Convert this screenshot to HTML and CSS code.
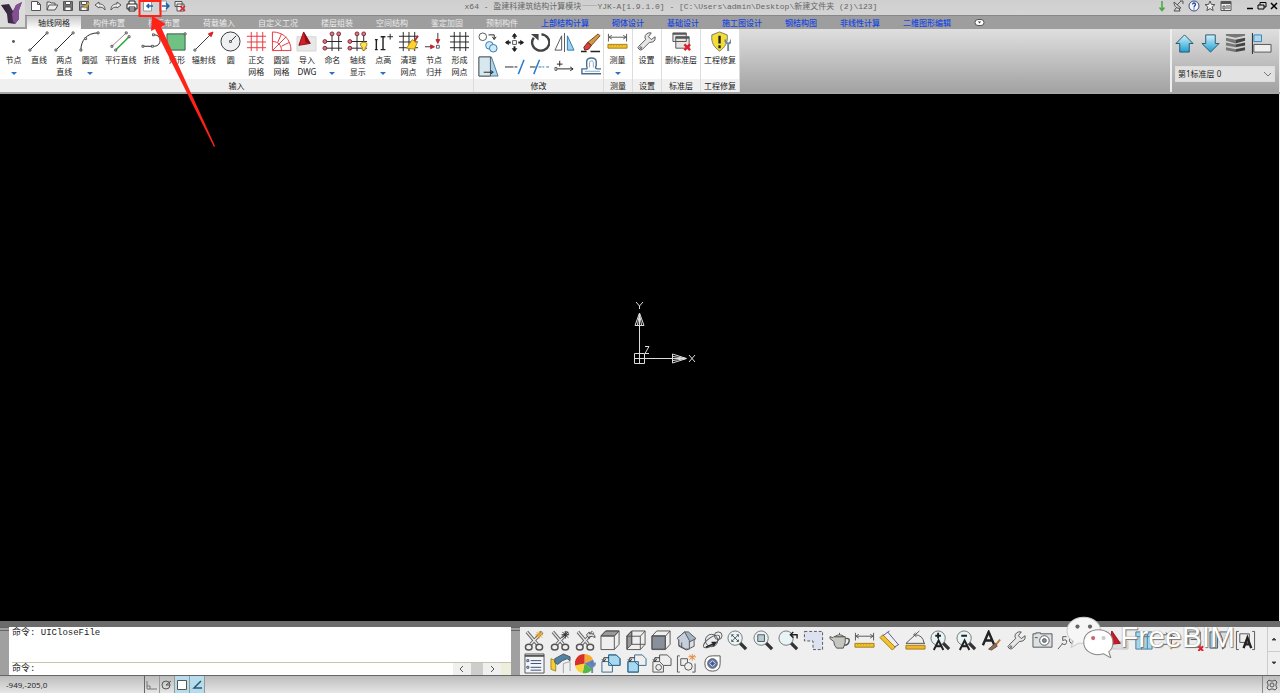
FILE: index.html
```html
<!DOCTYPE html>
<html lang="zh-CN">
<head>
<meta charset="utf-8">
<meta name="viewport" content="width=device-width, initial-scale=1">
<title>YJK-A 建筑结构计算模块</title>
<link rel="stylesheet" href="styles.css">
</head>
<body>
<svg class="sprite" aria-hidden="true">
  <defs>
    <linearGradient id="sky" x1="0" y1="0" x2="0" y2="1"><stop offset="0" stop-color="#d5f1fb"/><stop offset="1" stop-color="#1a9fd0"/></linearGradient>
    <linearGradient id="violet" x1="0" y1="0" x2="1" y2="0"><stop offset="0" stop-color="#2a2130"/><stop offset="1" stop-color="#5b3a66"/></linearGradient>
  </defs>
  <symbol id="scissors" viewBox="0 0 22 22"><path d="M3 2l11 13M19 2L7 15" stroke="#666" stroke-width="3.500"/><path d="M3 2l11 13M19 2L7 15" stroke="#e6e6e6" stroke-width="1.500"/><ellipse cx="5" cy="18" rx="3.500" ry="3" stroke="#555" stroke-width="1.500"/><ellipse cx="16" cy="18" rx="3.500" ry="3" stroke="#555" stroke-width="1.500"/></symbol>
  <symbol id="lens" viewBox="0 0 22 22"><path d="M13 13l7 7" stroke="#333" stroke-width="3.500"/><circle cx="8.500" cy="8.500" r="7.500" fill="#e9f4f6" stroke="#777"/></symbol>
  <symbol id="ruler" viewBox="0 0 22 22"><path d="M1.500 3v8M20.500 3v8M2 6.500h18M5 4.500l-3 2 3 2M17 4.500l3 2-3 2"/><path d="M1 14h20v4H1z" fill="#efc32f" stroke="#a57b12"/><path d="M4 14v2M7 14v2M10 14v2M13 14v2M16 14v2" stroke="#c79a20"/></symbol>
  <symbol id="wrench" viewBox="0 0 22 22"><path d="M3 16L10 9Q8 4 13 2l3 0-3 4 3 3 4-3Q21 12 14 12L7 19Q5 21 3 19T3 16z" fill="#e7e7e7" stroke="#555"/><circle cx="5" cy="17.500" r="1"/></symbol>
  <symbol id="grid" viewBox="0 0 22 22"><path d="M1 5.500h20M1 11.500h20M1 17.500h20M5.500 1v20M11.500 1v20M17.500 1v20"/></symbol>
  <symbol id="nodes" viewBox="0 0 22 22"><path d="M2 11h19M2 18h19M10.500 3v18M17.500 3v18" stroke="#222"/><g fill="#d97783" stroke="#7d2a35"><circle cx="10.500" cy="3" r="2"/><circle cx="17.500" cy="3" r="2"/><circle cx="3" cy="11" r="2"/><circle cx="3" cy="18" r="2"/></g></symbol>
  <symbol id="cube" viewBox="0 0 22 22"><path d="M1 6.500L6 1h14v14l-5 5.500H1zM1 6.500h14v14M15 6.500L20 1"/></symbol>
  <symbol id="page" viewBox="0 0 12 12"><path d="M1.500 1.500h6l3 3v6h-9zM7.500 1.500v3h3" fill="#fff"/></symbol>
  <symbol id="sheets" viewBox="0 0 22 22"><path d="M2 9h7l4 4v7H2z"/><path d="M9 9V2h8l4 4v7h-8" /><path d="M9 5H4v3M2 6.500L4 9l2-2.500" stroke="#222"/></symbol>
</svg>

<div class="app">
  <header class="titlebar">
    <button class="logo" aria-label="应用菜单"><svg viewBox="0 0 25 26"><path d="M1 4l8-1 4 7 3-6 6-3-3 8v9l-4 5-7-1-1-9z" fill="url(#violet)"/><path d="M12 13l4-9 6-3-3 8v9l-4 5-2-3z" fill="#835091"/></svg></button>
    <nav class="quick" aria-label="快速访问">
      <button aria-label="新建"><svg><use href="#page"/></svg></button>
      <button aria-label="打开"><svg viewBox="0 0 12 12"><path d="M1 10V2h3l1 1h4v2M1 10l2-5h9l-3 5z" fill="#eee"/></svg></button>
      <button aria-label="保存"><svg viewBox="0 0 12 12"><path d="M1.500 1.500h9v9h-9z" fill="#777"/><path d="M3.500 1.500h5v3h-5zM3 7h6v3.500H3z" fill="#fff"/></svg></button>
      <button aria-label="另存为"><svg viewBox="0 0 12 12"><path d="M1.500 1.500h9v9h-9z" fill="#999"/><path d="M3.500 1.500h5v3h-5zM3 7h6v3.500H3z" fill="#fff"/><path d="M6 8l5-5" stroke="#d39a35" stroke-width="2"/></svg></button>
      <button aria-label="撤销"><svg viewBox="0 0 12 12"><path d="M1 5l4-3v2c4 0 6 2 6 6-1-2-3-3-6-3v1z" fill="#eee"/></svg></button>
      <button aria-label="重做"><svg viewBox="0 0 12 12"><path d="M11 5L7 2v2C3 4 1 6 1 10c1-2 3-3 6-3v1z" fill="#eee"/></svg></button>
      <button aria-label="打印"><svg viewBox="0 0 12 12"><path d="M3 4V1h6v3M1 4h10v5H1zM3 7h6v4H3z" fill="#fff" stroke="#222"/></svg></button>
      <button aria-label="导入"><svg viewBox="0 0 12 12"><path d="M1.500 1h8v10h-8z" fill="#fff" stroke="#999"/><path d="M11 6H5M7 4L5 6l2 2" stroke="#1764b5" stroke-width="1.500"/></svg></button>
      <button aria-label="导出"><svg viewBox="0 0 12 12"><path d="M1.500 1h7v10h-7z" fill="#fff" stroke="#999"/><path d="M4 6h7M8 3l3 3-3 3" stroke="#1764b5" stroke-width="1.500"/></svg></button>
      <button aria-label="关闭文件"><svg viewBox="0 0 12 12"><path d="M1 1.500h7v5H1zM3 4h7v7H3z" fill="#eee"/><path d="M6 6l5 5M11 6l-5 5" stroke="#e0202c" stroke-width="1.500"/></svg></button>
    </nav>
    <h1 class="title">x64 - 盈建科建筑结构计算模块<span>——</span>YJK-A[1.9.1.0] - [C:\Users\admin\Desktop\新建文件夹 (2)\123]</h1>
    <div class="quick help">
      <button aria-label="下载"><svg viewBox="0 0 12 12"><path d="M6 1v9M3.500 7.500L6 10.500l2.500-3" stroke="#4aa547" stroke-width="1.500"/></svg></button>
      <button aria-label="通讯"><svg viewBox="0 0 12 12"><path d="M2 2c0 5 3 7 7 6zM5 5l4-4M8 1h3v3M4 8l-2 3h6L7 8"/></svg></button>
      <button aria-label="帮助"><svg viewBox="0 0 12 12"><circle cx="6" cy="6" r="5" fill="#f4f8ff" stroke="#3d4a78"/><path d="M4.500 4.500c0-2 3-2 3 0 0 1-1.500 1-1.500 3M6 8.500v1" stroke="#2347a6" stroke-width="1.300"/></svg></button>
      <button aria-label="收藏"><svg viewBox="0 0 12 12"><path d="M6 1l1.400 3.400 3.600.2-2.800 2.300 1 3.700L6 8.600l-3.200 2 1-3.700L1 4.600l3.600-.2z" fill="#eee"/></svg></button>
      <button aria-label="窗口选项"><svg viewBox="0 0 12 12"><path d="M1 1.500h10v9H1z" fill="#eee"/><path d="M1 3h10" stroke-width="2"/><path d="M3 6h2v3H3zM6 6h4M6 8h4"/></svg></button>
    </div>
    <div class="window">
      <button aria-label="最小化"><svg viewBox="0 0 12 12"><path d="M3 8.500h6" stroke="#000" stroke-width="1.500"/></svg></button>
      <button aria-label="还原"><svg viewBox="0 0 12 12"><path d="M4 5V2.500h6V7H8M2 5h6v4H2z" stroke="#000"/></svg></button>
      <button aria-label="关闭"><svg viewBox="0 0 12 12"><path d="M3 3l6 6M9 3L3 9" stroke="#000" stroke-width="1.500"/></svg></button>
    </div>
  </header>

  <nav class="tabs" aria-label="功能区">
    <button class="active">轴线网格</button><button>构件布置</button><button>楼板布置</button><button>荷载输入</button><button>自定义工况</button><button>楼层组装</button><button>空间结构</button><button>鉴定加固</button><button>预制构件</button><a href="#">上部结构计算</a><a href="#">砌体设计</a><a href="#">基础设计</a><a href="#">施工图设计</a><a href="#">钢结构图</a><a href="#">非线性计算</a><a href="#">二维图形编辑</a><button aria-label="折叠"><svg viewBox="0 0 10 7"><rect x=".5" y=".5" width="9" height="6" rx="3" fill="#fff"/><path d="M3.500 2.500h3L5 4.500z" fill="#333" stroke="none"/></svg></button>
  </nav>

  <section class="ribbon">
    <div class="panel draw">
      <div class="tools">
        <button class="tool"><svg viewBox="0 0 22 22"><circle cx="11" cy="11" r="1.500" fill="#555" stroke="none"/></svg><span>节点</span><i></i></button>
        <button class="tool"><svg viewBox="0 0 22 22"><path d="M2 20L20 2" stroke="#222"/><path d="M1 19h2v2H1zM19 1h2v2h-2z" fill="#fff"/></svg><span>直线</span></button>
        <button class="tool"><svg viewBox="0 0 22 22"><path d="M2 20L20 2" stroke="#222"/><path d="M1 19h2v2H1zM19 1h2v2h-2z" fill="#fff"/></svg><span>两点<br>直线</span></button>
        <button class="tool"><svg viewBox="0 0 22 22"><path d="M2 20C2 10 8 2 20 2" stroke="#222"/><path d="M1 19h2v2H1zM19 1h2v2h-2zM6 7h2v2H6z" fill="#fff"/></svg><span>圆弧</span><i></i></button>
        <button class="tool wide"><svg viewBox="0 0 22 22"><path d="M2 16L17 2" stroke="#a47a7a"/><path d="M6 20L20 6" stroke="#24a637" stroke-width="1.500"/><path d="M1 15h2v2H1zM16 1h2v2h-2zM5 19h2v2H5zM19 5h2v2h-2z" fill="#fff"/></svg><span>平行直线</span></button>
        <button class="tool"><svg viewBox="0 0 22 22"><path d="M2 16h12c8 0 8-12 0-12h-1" stroke="#222"/><path d="M1 15h2v2H1zM11 15h2v2h-2zM12 3h2v2h-2z" fill="#fff"/></svg><span>折线</span></button>
        <button class="tool"><svg viewBox="0 0 22 22"><path d="M1 3h19v17H1z" fill="#70c184" stroke="#355c40"/><path d="M19 2h2v2h-2zM0 19h2v2H0z" fill="#fff"/></svg><span>矩形</span></button>
        <button class="tool mid"><svg viewBox="0 0 22 22"><path d="M2 20L18 4" stroke="#333"/><path d="M1 19h2v2H1z" fill="#fff"/><path d="M21 1l-2 5-3-3z" fill="#e31c23" stroke="#e31c23"/></svg><span>辐射线</span></button>
        <button class="tool"><svg viewBox="0 0 22 22"><circle cx="11" cy="11" r="10" fill="#eef0f3" stroke="#333"/><path d="M11 11l6-6" stroke="#333"/><path d="M10 10h2v2h-2z" fill="#fff"/></svg><span>圆</span></button>
        <button class="tool red"><svg><use href="#grid"/></svg><span>正交<br>网格</span></button>
        <button class="tool red"><svg viewBox="0 0 22 22"><path d="M1.500 1v19.500H21C21 9 13 1 1.500 1zM1.500 11c6 0 9.500 4 9.500 9.500M2 20L16 6M7 12l4-9M11 16l8-4"/></svg><span>圆弧<br>网格</span></button>
        <button class="tool"><svg viewBox="0 0 22 22"><path d="M1 6h20v15H1z" fill="#e8e8e8" stroke="#d5d5d5"/><path d="M8 1l7 12-12 2z" fill="#d41f27" stroke="#8f1015"/><path d="M8 1l7 12-5-1z" fill="#8f1015" stroke="none"/></svg><span>导入<br>DWG</span></button>
        <button class="tool"><svg><use href="#nodes"/></svg><span>命名</span><i></i></button>
        <button class="tool"><svg viewBox="0 0 22 22"><use href="#nodes"/><path d="M14 13q4-3 7 0 0 4-2 4v3h-3v-3q-2-1-2-4z" fill="#ffe25a" stroke="#b18718"/></svg><span>轴线<br>显示</span></button>
        <button class="tool"><svg viewBox="0 0 22 22"><path d="M3.500 9v10M10.500 6v13M2 19.500h3M8 19.500h5M8 6h5M2 9h3" stroke="#222" stroke-width="1.500"/><path d="M15 6h6M18 3v6" stroke="#222"/></svg><span>点高</span><i></i></button>
        <button class="tool dark"><svg viewBox="0 0 22 22"><use href="#grid"/><path d="M21 5l-4 6" stroke="#b2322b" stroke-width="2"/><path d="M15 9l5 4-3 6-8-1z" fill="#ffd32d" stroke="#b18718"/></svg><span>清理<br>网点</span></button>
        <button class="tool"><svg viewBox="0 0 22 22"><path d="M14.500 2v10M1 16.500h9" stroke="#333"/><path d="M12.500 9h4l-2 4zM7 14.500l4 2-4 2z" fill="#c4262d" stroke="#c4262d"/><path d="M13 15h3v3h-3z" fill="#fff"/></svg><span>节点<br>归并</span></button>
        <button class="tool dark"><svg><use href="#grid"/></svg><span>形成<br>网点</span></button>
      </div>
      <h2>输入</h2>
    </div>
    <div class="panel modify">
      <div class="matrix">
        <button aria-label="复制"><svg viewBox="0 0 22 22"><circle cx="5" cy="5" r="4"/><path d="M11 3h6v4M15 5l2 3 2-3" stroke="#222"/><circle cx="12" cy="14" r="4" fill="#cfeaf8" stroke="#2f79b0"/><circle cx="16" cy="17" r="4" fill="#cfeaf8" stroke="#2f79b0"/></svg></button>
        <button aria-label="移动"><svg viewBox="0 0 22 22"><path d="M11 2v5M11 15v5M2 11h5M15 11h5" stroke="#222" stroke-width="2"/><path d="M8 5l3-4 3 4zM8 17l3 4 3-4zM5 8l-4 3 4 3zM17 8l4 3-4 3z" fill="#222" stroke="none"/><path d="M9 9h4v4H9z"/></svg></button>
        <button aria-label="旋转"><svg viewBox="0 0 22 22"><path d="M5 6a9 8.500 0 1 0 8-3.500" stroke="#444" stroke-width="2.500"/><path d="M2 2h8v7z" fill="#444" stroke="none"/></svg></button>
        <button aria-label="镜像"><svg viewBox="0 0 22 22"><path d="M11 1v20"/><path d="M8 4v15H1z" fill="#fff"/><path d="M14 4v15h7z" fill="#9ed3ee" stroke="#2f79b0"/></svg></button>
        <button aria-label="删除"><svg viewBox="0 0 22 22"><path d="M1 20.500h6M11 20.500h10" stroke="#222" stroke-width="1.500"/><path d="M19 2l2 2-9 10-4-3z" fill="#d49745" stroke="#704c20"/><path d="M8 11l4 3-3 4-4 1-1-3z" fill="#d8443a" stroke="#702018"/></svg></button>
        <button aria-label="拉伸"><svg viewBox="0 0 22 22"><path d="M1 1h13l7 20H1z" fill="#a8d7ef" stroke="#4d7690"/><path d="M1 1h12v20H1z" fill="#d8e8f1"/><path d="M6 17h9M13 15l3 2-3 2" stroke="#222"/></svg></button>
        <button aria-label="修剪"><svg viewBox="0 0 22 22"><path d="M1 11.500h9M11 11.500h3" stroke="#222"/><path d="M15 19l6-15" stroke="#2477ca" stroke-width="1.500"/></svg></button>
        <button aria-label="延伸"><svg viewBox="0 0 22 22"><path d="M1 11.500h6" stroke="#222"/><path d="M10 11.500h3M14 11.500h2M18 11.500h3" stroke="#2477ca"/><path d="M5 19l6-15" stroke="#2477ca" stroke-width="1.500"/></svg></button>
        <button aria-label="偏移"><svg viewBox="0 0 22 22"><path d="M2 13.500h18M17 11.500l3 2-3 2M3 8.500h6M6 5v6" stroke="#222"/><path d="M1 12h2v3H1z" fill="#fff"/></svg></button>
        <button aria-label="等距"><svg viewBox="0 0 22 22"><path d="M22 18.500H2v-5h5q1-1 0-3V6q0-4 5-4t5 4v4q-2 3 1 3.500h4" stroke="#486f91" stroke-width="1.500"/><path d="M21 16H5M10 12V7q0-2 2-2t2 2v5" stroke="#88a9c2"/></svg></button>
      </div>
      <h2>修改</h2>
    </div>
    <div class="panel small"><div class="tools"><button class="tool"><svg><use href="#ruler"/></svg><span>测量</span><i></i></button></div><h2>测量</h2></div>
    <div class="panel small"><div class="tools"><button class="tool"><svg><use href="#wrench"/></svg><span>设置</span></button></div><h2>设置</h2></div>
    <div class="panel large"><div class="tools"><button class="tool wide"><svg viewBox="0 0 22 22"><path d="M2 2h14v9H2zM5 6h14v12H5z" fill="#e5e5e5"/><path d="M2 3h14M5 7h14" stroke-width="2"/><path d="M14 14l6 6M20 14l-6 6" stroke="#e31c2c" stroke-width="2.500"/></svg><span>删标准层</span></button></div><h2>标准层</h2></div>
    <div class="panel large"><div class="tools"><button class="tool wide"><svg viewBox="0 0 22 22"><path d="M10 1l8 3c1 8-2 13-8 17C4 17 1 12 2 4z" fill="#f5de34" stroke="#777"/><path d="M10 5v8M10 15v3" stroke="#222" stroke-width="2.500"/><path d="M19 12v9M16 9q0 4 3 4t3-4" stroke="#6d899d" stroke-width="2"/></svg><span>工程修复</span></button></div><h2>工程修复</h2></div>
    <div class="floors">
      <div class="floor-tools">
        <button aria-label="上层"><svg viewBox="0 0 22 22"><path d="M11 2l9 9h-4v9H6v-9H2z" fill="url(#sky)" stroke="#28556c"/></svg></button>
        <button aria-label="下层"><svg viewBox="0 0 22 22"><path d="M11 20l9-9h-4V2H6v9H2z" fill="url(#sky)" stroke="#28556c"/></svg></button>
        <button aria-label="全楼"><svg viewBox="0 0 22 22"><g fill="#777" stroke="none"><path d="M1 1h20v2l-10 2L1 3zM1 5l10 2v4L1 8zM1 10l10 2v3L1 13zM1 15l10 2v3L1 18z"/><path d="M21 5l-10 2v4l10-3zM21 10l-10 2v3l10-2zM21 15l-10 2v3l10-2z" fill="#444"/></g></svg></button>
        <button aria-label="对齐"><svg viewBox="0 0 22 22"><path d="M1.500 0v22" stroke="#222"/><path d="M3 2h8v7H3z" fill="#add6ef" stroke="#3985b8"/><path d="M3 12h18v8H3z" fill="#eee"/></svg></button>
      </div>
      <select aria-label="标准层"><option>第1标准层 0</option></select>
    </div>
  </section>

  <main class="canvas">
    <svg class="axes" viewBox="0 0 60 66" aria-label="坐标轴">
      <path d="M5.500 53.500h10v10h-10zM10.500 64V16M5 58.500h52M6 25.500h9L10.500 13zM8.500 25l2-11 2 11M43.500 54v9l14-4.500zM44 56.500l13 2-13 2"/>
      <path d="M7 2l3.500 4L14 2M10.500 6v3M16 46.500h4l-4 7h4M66 55l-6 7M60 55l6 7"/>
    </svg>
  </main>

  <section class="dock">
    <div class="grip"></div>
    <div class="command">
      <p>命令: UICloseFile</p>
      <div class="entry">
        <label for="cmd">命令:</label><input id="cmd" type="text">
        <div class="hscroll"><button aria-label="向左"><svg viewBox="0 0 6 8"><path d="M4 1L1 4l3 3"/></svg></button><b></b><button aria-label="向右"><svg viewBox="0 0 6 8"><path d="M2 1l3 3-3 3"/></svg></button><em></em></div>
      </div>
    </div>
    <div class="grip"></div>
    <div class="palette">
      <button aria-label="剪切新建"><svg viewBox="0 0 22 22"><use href="#scissors"/><path d="M16 1v8M12 5h8M13 2l6 6M19 2l-6 6" stroke="#eda51c"/></svg></button>
      <button aria-label="剪切"><svg viewBox="0 0 22 22"><use href="#scissors"/><path d="M16 1v8M12 5h8M13 2l6 6M19 2l-6 6" stroke="#333"/></svg></button>
      <button aria-label="剪切还原"><svg viewBox="0 0 22 22"><use href="#scissors"/><path d="M12 5l3-3v2q6-1 6 4-2-2-6-1v2z" fill="#ddd"/></svg></button>
      <button aria-label="顶视图"><svg viewBox="0 0 22 22"><path d="M1 6l5-5h14l-5 5z" fill="#999"/><use href="#cube"/></svg></button>
      <button aria-label="左视图"><svg viewBox="0 0 22 22"><path d="M1 6l5-5v14l-5 5z" fill="#999"/><path d="M6 15h14M6 1v14"/><use href="#cube"/></svg></button>
      <button aria-label="前视图"><svg viewBox="0 0 22 22"><path d="M1 6h14v14H1z" fill="#87909b"/><use href="#cube"/></svg></button>
      <button aria-label="轴测"><svg viewBox="0 0 22 22"><path d="M3 10v7l8 4 8-4V9z" fill="#d9e1e9"/><path d="M1 9l8-7 4 0 8 7-8 4z" fill="#a5b2c1"/><path d="M1 9l8-7 5 9v9l-4 0-7-4v-6" fill="#c6d0dc"/><path d="M6 13v5"/></svg></button>
      <button aria-label="动态观察"><svg viewBox="0 0 22 22"><circle cx="10" cy="11" r="6.500" fill="#e8eef0"/><circle cx="17" cy="6" r="4"/><ellipse cx="10" cy="12" rx="10" ry="4" transform="rotate(-35 10 12)"/><path d="M4 18l9-4M10 13l4 0-2 4" stroke="#222" stroke-width="1.500"/></svg></button>
      <button aria-label="全部缩放"><svg viewBox="0 0 22 22"><use href="#lens"/><path d="M5 5l7 7M12 5l-7 7M5 7V5h2M10 5h2v2M5 10v2h2M10 12h2v-2" stroke="#555"/></svg></button>
      <button aria-label="窗口缩放"><svg viewBox="0 0 22 22"><use href="#lens"/><path d="M5 5h7v7H5z" fill="#b9cdd5"/></svg></button>
      <button aria-label="上一视图"><svg viewBox="0 0 22 22"><use href="#lens"/><path d="M20 9V5h-6M16 2l-3 3 3 3" stroke="#222" stroke-width="1.500"/></svg></button>
      <button aria-label="框选"><svg viewBox="0 0 22 22"><path d="M1.500 1.500h19v19h-10v-9h-9z" fill="#dce2f0" stroke-dasharray="3 2"/></svg></button>
      <button aria-label="渲染"><svg viewBox="0 0 22 22"><path d="M17 9q5-1 4 3t-5 4" stroke-width="1.500"/><path d="M5 7h12q1 6-2 12H8Q5 16 5 12L1 9V7l3 1z" fill="#c4c6c0"/><path d="M6 7q5-4 10 0zM11 5V3" fill="#ddd"/></svg></button>
      <button aria-label="距离"><svg><use href="#ruler"/></svg></button>
      <button aria-label="斜距"><svg viewBox="0 0 22 22"><path d="M1 8l13 13 3-3L4 5z" fill="#efc32f" stroke="#a57b12"/><path d="M9 2l11 13M4 6l7-5M16 18l5-3" stroke="#5c5594"/></svg></button>
      <button aria-label="角度"><svg viewBox="0 0 22 22"><path d="M1 16h20v4H1z" fill="#efb52f" stroke="#a57b12"/><path d="M1 14L15 1M10 5q9 0 10 9M1 14h20M11 3l-2 2 3 2"/></svg></button>
      <button aria-label="放大文字"><svg viewBox="0 0 22 22"><use href="#lens"/><path d="M8.500 3v6M5.500 6h6M4 21l5-10 5 10M6 17h6" stroke="#222" stroke-width="2"/></svg></button>
      <button aria-label="缩小文字"><svg viewBox="0 0 22 22"><use href="#lens"/><path d="M5.500 6h6M4 21l5-10 5 10M6 17h6" stroke="#222" stroke-width="2"/></svg></button>
      <button aria-label="文字样式"><svg viewBox="0 0 22 22"><path d="M2 16L8 2l6 14M5 11h7" stroke="#222" stroke-width="2.500"/><path d="M20 10l-5 6" stroke="#c27b36" stroke-width="2"/><path d="M15 14l2 3-6 4-3-1z" fill="#9d6a48"/></svg></button>
      <button aria-label="工具设置"><svg><use href="#wrench"/></svg></button>
      <button aria-label="截图"><svg viewBox="0 0 22 22"><path d="M1 4h3V3h5v1h12v14H1z" fill="#dde1e3"/><circle cx="13" cy="11" r="5" fill="#fff"/><circle cx="13" cy="11" r="2" fill="#7896aa"/><path d="M3 8h3"/></svg></button>
      <button aria-label="标注"><svg viewBox="0 0 22 22"><path d="M1 20L6 14M10 7H6v4q5-2 4 2t-5 1M15 7q-4 4 0 7 4-3 0-7M16 15l5-6"/></svg></button>
      <button aria-label="图层"><svg viewBox="0 0 22 22"><path d="M2 8h16v10H2z" fill="#ddd" stroke="#aaa"/></svg></button>
      <button aria-label="导出图纸"><svg viewBox="0 0 22 22"><path d="M5 12h16v8H5z" fill="#ddd" stroke="#ccc"/><path d="M4 1l9 13-11 1z" fill="#c61b26" stroke="#9b121b"/></svg></button>
      <button aria-label="表格"><svg viewBox="0 0 22 22"><path d="M3 2h17v18H3zM3 7h17M9 2v18M15 2v18" fill="#a8d5e8" stroke="#447c99"/></svg></button>
      <button aria-label="编辑文字"><svg viewBox="0 0 22 22"><path d="M1 5h12v10H1M7 3l11 5"/><path d="M12 20l7-7" stroke="#e59938" stroke-width="2"/></svg></button>
      <button aria-label="删除图纸"><svg viewBox="0 0 22 22"><path d="M5 2h12v16H5zM7 6h8M7 10h8"/><path d="M15 17l5 5M20 17l-5 5" stroke="#e31c2c" stroke-width="2"/></svg></button>
      <button aria-label="筛选"><svg viewBox="0 0 22 22"><path d="M1 2h8v17H1z" fill="#9ecbe1"/><path d="M11 2h10l-4 7v9l-3 2V9z" fill="#ddd"/></svg></button>
      <button aria-label="文字框"><svg viewBox="0 0 22 22"><path d="M4 1.500H1.500v19H4M18 1.500h2.500v19H18M5 4h10v9H5z"/><path d="M9 19l4-11 4 11M11 15h5" stroke="#222" stroke-width="2.500"/></svg></button>
      <button aria-label="列表"><svg viewBox="0 0 22 22"><path d="M1 1h20v20H1z" fill="#f4f5f8"/><path d="M1 3h20" stroke-width="2"/><path d="M3 7h2v2H3zM3 14h2v2H3zM7 8h11M7 11h11M7 15h11M7 18h11" stroke="#3c4e75"/></svg></button>
      <button aria-label="构件"><svg viewBox="0 0 22 22"><path d="M1 6l5 2v11l-5-2z" fill="#f2cc3b" stroke="#a58825"/><path d="M5 6l9-5 7 3v4l-3-2-5 2-5 4-3-2z" fill="#4e84aa"/><path d="M14 11l7-2v10M14 11v10" stroke="#9aa6af"/></svg></button>
      <button aria-label="颜色"><svg viewBox="0 0 22 22"><g stroke="none"><path d="M10 11V1a10 10 0 0 1 9 6z" fill="#f7a928"/><path d="M10 11l9-4a10 10 0 0 1-1 10z" fill="#5d7bc8"/><path d="M10 11l8 6a10 10 0 0 1-10 4z" fill="#52b848"/><path d="M10 11L8 21a10 10 0 0 1-8-8z" fill="#f9d43b"/><path d="M10 11L0 13A10 10 0 0 1 10 1z" fill="#d72f29"/></g><path d="M18 13v8M15 10q0 4 3 4t3-4" stroke="#718ca2" stroke-width="2"/></svg></button>
      <button class="blue" aria-label="前置"><svg viewBox="0 0 22 22"><path d="M9 2h8l4 4v7H9z" fill="#a7d9f3"/><use href="#sheets"/></svg></button>
      <button class="blue" aria-label="后置"><svg viewBox="0 0 22 22"><path d="M2 9h11v11H2z" fill="#a7d9f3"/><use href="#sheets"/></svg></button>
      <button aria-label="置底"><svg viewBox="0 0 22 22"><use href="#sheets"/><circle cx="8" cy="15" r="3"/></svg></button>
      <button aria-label="编组"><svg viewBox="0 0 22 22"><path d="M4 3H1.500v17H4M17 20h3v-9M5 6h7v7H5z"/><circle cx="13" cy="14" r="4" fill="#eee"/><path d="M17 1v7M13 4h8M14 2l6 5M20 2l-6 5" stroke="#e88734"/></svg></button>
      <button aria-label="视点"><svg viewBox="0 0 22 22"><path d="M11 3h8v8q0 8-8 8t-8-8 8-8z" fill="#fff"/><circle cx="11" cy="11" r="5" fill="#6179ac"/><path d="M8 11l3-3 3 3-3 3z" fill="#445b91" stroke="#dde5f4"/></svg></button>
    </div>
    <div class="vscroll"><button aria-label="向上"><svg viewBox="0 0 6 4"><path d="M1 3l2-2 2 2z" fill="#222"/></svg></button><button aria-label="向下"><svg viewBox="0 0 6 4"><path d="M1 1l2 2 2-2z" fill="#222"/></svg></button></div>
    <div class="watermark">
      <svg viewBox="0 0 46 40"><path d="M17 1C8 1 1 7 1 14c0 4 2 8 6 10l-2 6 7-4h5c9 0 16-5 16-12S26 1 17 1z" fill="#f6f6f6" stroke="#ccc"/><path d="M31 13c-8 0-14 5-14 12s6 12 14 12l5-1 7 4-2-6c3-2 4-5 4-9 0-7-6-12-14-12z" fill="#fff" stroke="#888"/><g fill="#666" stroke="none"><circle cx="11" cy="10" r="2"/><circle cx="23" cy="10" r="2"/><circle cx="26" cy="21" r="2" fill="#c86a70"/><circle cx="36" cy="21" r="2" fill="#ccc"/></g></svg>
      <span>FreeBIM</span>
    </div>
  </section>

  <footer class="status">
    <output>-949,-205,0</output>
    <div class="toggles">
      <button aria-label="正交"><svg viewBox="0 0 12 12"><path d="M1 2v8h10M1 7h3v3" stroke="#777"/></svg></button>
      <button aria-label="极轴"><svg viewBox="0 0 12 12"><circle cx="5" cy="6" r="4"/><path d="M5 6l5-4M5 6h4"/></svg></button>
      <button class="on" aria-label="捕捉"><svg viewBox="0 0 12 12"><path d="M1.500 1.500h9v9h-9z" fill="#fff"/></svg></button>
      <button class="on" aria-label="追踪"><svg viewBox="0 0 12 12"><path d="M10 2L3 9h8" stroke="#245b75" stroke-width="1.500"/></svg></button>
    </div>
    <button class="gear" aria-label="设置"><svg viewBox="0 0 12 12"><path d="M3 1l2 1h2l2-1 2 2-1 2v2l1 2-2 2-2-1H5l-2 1-2-2 1-2V5L1 3z"/><circle cx="6" cy="6" r="2"/></svg></button>
  </footer>

  <svg class="pointer" viewBox="0 0 220 150" aria-hidden="true"><path d="M139.500 1h21v15h-21z" fill="none" stroke="#ff2218" stroke-width="2"/><path d="M152 16l14 8-5 3 54 119-1 1-59-118-4 2z" fill="#ff2218" stroke="none"/></svg>
</div>
</body>
</html>
```

FILE: styles.css
```css
* { box-sizing: border-box; }
body {
  margin: 0;
  background: #000;
  color: #222;
  font: 8px/12px "Noto Sans", "Noto Sans CJK SC", sans-serif;
}
button {
  display: flex;
  align-items: center;
  justify-content: center;
  margin: 0;
  padding: 0;
  border: 0;
  background: none;
  color: inherit;
  font: inherit;
}
svg { display: block; flex: none; fill: none; stroke: #555; }
h1, h2, p { margin: 0; font-size: inherit; font-weight: 400; }
.sprite { position: absolute; width: 0; height: 0; }
.app { position: relative; display: flex; flex-direction: column; min-height: 100vh; }

/* Title bar */
.titlebar {
  display: flex;
  align-items: flex-start;
  height: 16px;
  background: linear-gradient(#cfcfcf, #d4d4d4);
  border-bottom: 1px solid #888;
}
.logo { z-index: 1; width: 25px; height: 27px; margin-right: 5px; background: #dcdcdc; }
.logo svg { width: 25px; height: 26px; stroke: none; }
.quick, .window { display: flex; gap: 4px; }
.quick svg, .window svg { width: 12px; height: 12px; }
.title {
  flex: 1;
  text-align: center;
  white-space: nowrap;
  color: #666;
  font-family: "Liberation Mono", "Noto Sans CJK SC", monospace;
}
.title span { font-family: "Noto Sans CJK SC", sans-serif; }
.help { margin-right: 12px; }
.window { gap: 0; }

/* Tabs */
.tabs {
  display: flex;
  gap: 1px;
  height: 13px;
  padding-left: 27px;
  background: #9e9e9e;
  white-space: nowrap;
}
.tabs button, .tabs a {
  padding: 0 11px;
  color: #ececec;
  line-height: 13px;
  text-decoration: none;
}
.tabs a { color: #1747e0; font-weight: 500; }
.tabs .active { background: linear-gradient(#c8c8c8, #fff); color: #222; }
.tabs svg { width: 11px; height: 7px; }

/* Ribbon */
.ribbon {
  display: flex;
  height: 65px;
  border-bottom: 2px solid #a6a6a6;
  background: linear-gradient(#dfdfdf, #a2a2a2);
}
.panel {
  display: flex;
  flex-direction: column;
  border-right: 1px solid #dcdcdc;
  background: #fff;
}
.panel h2 { height: 13px; background: #f0f0f0; line-height: 13px; text-align: center; }
.tools { display: flex; flex: 1; justify-content: space-between; padding: 2px 1px 0; }
.draw { width: 474px; }
.modify { width: 130px; }
.small { width: 29px; }
.large { width: 39px; }
.tool { flex-direction: column; justify-content: flex-start; width: 25px; line-height: 12px; white-space: nowrap; }
.tool.mid { width: 28px; }
.tool.wide { width: 36px; }
.tool svg { width: 21px; height: 21px; margin-bottom: 2px; }
.tool i { width: 0; margin-top: 6px; border: 3px solid transparent; border-top-color: #2c72c4; border-bottom: 0; }
.red svg { stroke: #e8333b; }
.dark svg { stroke: #222; }
.matrix { display: grid; flex: 1; grid-template-columns: repeat(5, 1fr); padding: 2px 0 1px 2px; }
.matrix svg { width: 21px; height: 21px; }
.floors { width: 110px; margin-left: auto; padding: 4px 4px 4px 3px; border: 0 solid #eee; border-left-width: 2px; border-right-width: 1px; }
.floor-tools { display: flex; justify-content: space-between; margin-right: 3px; }
.floor-tools button { margin-left: -1px; }
.floor-tools svg { width: 21px; height: 21px; }
.floors select {
  appearance: none;
  width: 100%;
  height: 16px;
  margin-top: 12px;
  padding: 0 2px;
  border: 1px solid #ddd;
  background: linear-gradient(45deg, transparent 50%, #777 50%, #777 60%, transparent 60%) right 6px center / 4px 4px no-repeat, linear-gradient(-45deg, transparent 50%, #777 50%, #777 60%, transparent 60%) right 2px center / 4px 4px no-repeat, #e2e2e2;
  color: #222;
  font: inherit;
}

/* Drawing area */
.canvas {
  display: flex;
  flex: 1;
  align-items: center;
  justify-content: center;
  border-right: 1px solid #eee;
  background: #000;
}
.axes { width: 60px; height: 66px; margin-left: 38px; margin-bottom: 50px; stroke: #ddd; overflow: visible; }

/* Command line and palette */
.dock {
  position: relative;
  display: flex;
  height: 55px;
  border-top: 6px solid #6b6b6b;
  border-bottom: 1px solid #666;
  background: #efefef;
}
.grip { width: 9px; border-top: 4px double #666; background: #a0a0a0; }
.command {
  display: flex;
  flex-direction: column;
  justify-content: space-between;
  width: 502px;
  padding-left: 3px;
  background: #fff;
  font: 9px/12px "Liberation Mono", "Noto Sans CJK SC", monospace;
}
.entry { display: flex; height: 13px; border-top: 1px solid #c5c5a8; }
.entry input { flex: 1; min-width: 0; padding: 0; border: 0; outline: 0; font: inherit; }
.hscroll { display: flex; width: 58px; background: #f0f0f0; }
.hscroll button { flex: 1; }
.hscroll svg { width: 6px; height: 8px; }
.hscroll b { width: 12px; background: #cdcdcd; }
.hscroll em { width: 10px; background: #eeeedc; }
.palette {
  display: grid;
  flex: 1;
  grid-template-columns: repeat(29, 1fr);
  grid-template-rows: 23px 23px;
  padding: 2px 9px 0 2px;
}
.palette svg { width: 21px; height: 21px; }
.blue svg { stroke: #356b8d; }
.vscroll { display: grid; width: 13px; border-left: 1px solid #ccc; }
.vscroll button + button { border-top: 1px solid #ccc; }
.vscroll svg { width: 6px; height: 4px; }
.watermark {
  position: absolute;
  top: -14px;
  right: 45px;
  display: flex;
  align-items: center;
  color: #fff;
  font: 30px/48px "Liberation Sans", sans-serif;
  text-shadow: 1px 1px 1px #777, 0 0 1px #777;
}
.watermark svg { width: 48px; height: 42px; margin-right: 6px; }

/* Status bar */
.status {
  display: flex;
  height: 17px;
  padding-left: 6px;
  background: linear-gradient(#bcbcbc, #e6e6e6);
  font: 8px/17px "Open Sans", sans-serif;
}
.status output { width: 139px; border-right: 1px solid #666; }
.toggles { display: flex; }
.toggles button { width: 15px; border-right: 1px solid #999; }
.toggles .on { background: #b7dcec; }
.toggles svg, .gear svg { width: 12px; height: 12px; }
.gear { width: 18px; margin-left: auto; border-left: 1px solid #888; }

/* Callout over the quick access bar */
.pointer { position: absolute; top: 0; left: 0; z-index: 2; width: 220px; height: 150px; pointer-events: none; }
```
